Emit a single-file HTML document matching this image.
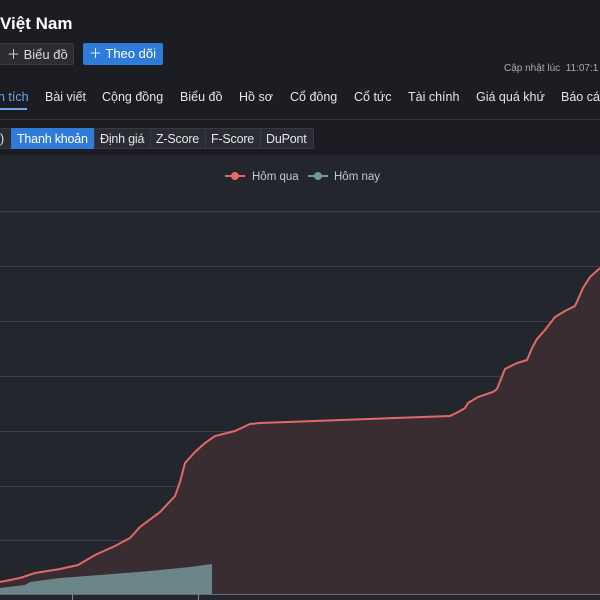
<!DOCTYPE html>
<html><head><meta charset="utf-8"><style>
body{margin:0;width:600px;height:600px;overflow:hidden;background:#1c1d22;font-family:"Liberation Sans",sans-serif;color:#e6e6e6;position:relative}
.t{position:absolute;white-space:nowrap}
.btn{position:absolute;top:43px;height:22px;border-radius:2px;font-size:13px;line-height:22px;white-space:nowrap}
.nav{position:absolute;top:90px;font-size:12.5px;color:#e6e6e6;white-space:nowrap}
.sub{position:absolute;top:128px;height:21px;line-height:21px;font-size:12.5px;background:#2a2c33;border:1px solid #383a42;padding:0 5px;box-sizing:border-box;white-space:nowrap;letter-spacing:-0.2px}
</style></head><body>
<div class="t" style="left:0;top:14px;font-size:17px;font-weight:bold;color:#fff">Việt Nam</div>
<div class="btn" style="left:-2px;width:76px;background:#2b2d33;border:1px solid #3a3c44;box-sizing:border-box;padding-left:8px;color:#ddd">＋ Biểu đồ</div>
<div class="btn" style="left:83px;width:80px;background:#2f7bd9;color:#fff;padding-left:6px;box-sizing:border-box">＋ Theo dõi</div>
<div class="t" style="left:504px;top:63px;font-size:10px;color:#aaa">Cập nhật lúc&nbsp; 11:07:1</div>
<div class="nav" style="left:-2px;color:#6aa6ea">n tích</div>
<div style="position:absolute;left:0;top:108px;width:27px;height:2px;background:#6aa6ea"></div>
<div class="nav" style="left:45px">Bài viết</div>
<div class="nav" style="left:102px">Cộng đồng</div>
<div class="nav" style="left:180px">Biểu đồ</div>
<div class="nav" style="left:239px">Hồ sơ</div>
<div class="nav" style="left:290px">Cổ đông</div>
<div class="nav" style="left:354px">Cổ tức</div>
<div class="nav" style="left:408px">Tài chính</div>
<div class="nav" style="left:476px">Giá quá khứ</div>
<div class="nav" style="left:561px">Báo cá</div>
<div style="position:absolute;left:0;top:119px;width:600px;height:1px;background:#33353c"></div>
<div class="sub" style="left:-6px;width:18px">)</div>
<div class="sub" style="left:11px;width:84px;background:#2f7bd9;border-color:#2f7bd9;color:#fff">Thanh khoản</div>
<div class="sub" style="left:94px;width:57px">Định giá</div>
<div class="sub" style="left:150px;width:56px">Z-Score</div>
<div class="sub" style="left:205px;width:56px">F-Score</div>
<div class="sub" style="left:260px;width:54px">DuPont</div>
<div style="position:absolute;left:0;top:155px;width:600px;height:445px;background:#23262d"></div>
<svg style="position:absolute;left:0;top:0" width="600" height="600">
<g stroke="#3d4047" stroke-width="1">
<line x1="0" y1="211.5" x2="600" y2="211.5"/><line x1="0" y1="266.5" x2="600" y2="266.5"/><line x1="0" y1="321.5" x2="600" y2="321.5"/><line x1="0" y1="376.5" x2="600" y2="376.5"/><line x1="0" y1="431.5" x2="600" y2="431.5"/><line x1="0" y1="486.5" x2="600" y2="486.5"/><line x1="0" y1="540.5" x2="600" y2="540.5"/>
</g>
<polygon fill="#3a2d32" points="0,582 20,578 35,573 60,569 78,565 95,555 115,546 130,538 140,527 160,512 175,496 180,482 185,463 195,452 205,443 215,436 235,431 250,424 260,423 450,416 460,411 465,408 468,403 478,397 493,392 497,389 505,369 517,363 527,360 532,348 537,339 545,330 555,317 565,311 575,306 583,288 590,277 600,268 600,594 0,594"/>
<polyline fill="none" stroke="#e06a6a" stroke-width="2" points="0,582 20,578 35,573 60,569 78,565 95,555 115,546 130,538 140,527 160,512 175,496 180,482 185,463 195,452 205,443 215,436 235,431 250,424 260,423 450,416 460,411 465,408 468,403 478,397 493,392 497,389 505,369 517,363 527,360 532,348 537,339 545,330 555,317 565,311 575,306 583,288 590,277 600,268"/>
<polygon fill="#6b8589" points="0,588 25,585 30,582 60,578 100,575 150,571 190,567 212,564 212,594 0,594"/>
<line x1="0" y1="594.5" x2="600" y2="594.5" stroke="#6b6e75"/>
<line x1="72.5" y1="594" x2="72.5" y2="600" stroke="#888"/><line x1="198.5" y1="594" x2="198.5" y2="600" stroke="#888"/>
<line x1="225" y1="176" x2="245" y2="176" stroke="#e06a6a" stroke-width="2"/><circle cx="235" cy="176" r="4" fill="#e06a6a"/>
<line x1="308" y1="176" x2="328" y2="176" stroke="#6b9a98" stroke-width="2"/><circle cx="318" cy="176" r="4" fill="#6b9a98"/>
<text x="252" y="180" font-size="11.5" fill="#c8c8c8" font-family="Liberation Sans">Hôm qua</text>
<text x="334" y="180" font-size="11.5" fill="#c8c8c8" font-family="Liberation Sans">Hôm nay</text>
</svg>
</body></html>
